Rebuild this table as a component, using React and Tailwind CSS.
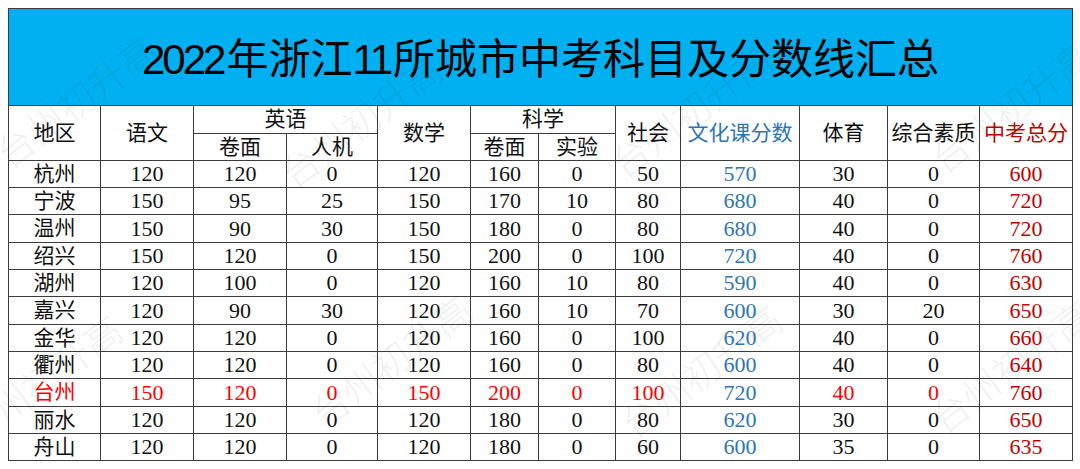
import React from "react";

const cols = [92, 93, 93, 91, 93, 68, 77, 65, 119, 88, 92, 93];
const colClass = [
  "w-[92px]", "w-[93px]", "w-[93px]", "w-[91px]", "w-[93px]", "w-[68px]",
  "w-[77px]", "w-[65px]", "w-[119px]", "w-[88px]", "w-[92px]", "w-[93px]"
];

const rows = [
  ["杭州", 120, 120, 0, 120, 160, 0, 50, 570, 30, 0, 600],
  ["宁波", 150, 95, 25, 150, 170, 10, 80, 680, 40, 0, 720],
  ["温州", 150, 90, 30, 150, 180, 0, 80, 680, 40, 0, 720],
  ["绍兴", 150, 120, 0, 150, 200, 0, 100, 720, 40, 0, 760],
  ["湖州", 120, 100, 0, 120, 160, 10, 80, 590, 40, 0, 630],
  ["嘉兴", 120, 90, 30, 120, 160, 10, 70, 600, 30, 20, 650],
  ["金华", 120, 120, 0, 120, 160, 0, 100, 620, 40, 0, 660],
  ["衢州", 120, 120, 0, 120, 160, 0, 80, 600, 40, 0, 640],
  ["台州", 150, 120, 0, 150, 200, 0, 100, 720, 40, 0, 760],
  ["丽水", 120, 120, 0, 120, 180, 0, 80, 620, 30, 0, 650],
  ["舟山", 120, 120, 0, 120, 180, 0, 60, 600, 35, 0, 635]
];

const rowHeights = [
  "h-[27px]", "h-[27px]", "h-[28px]", "h-[27px]", "h-[27px]", "h-[28px]",
  "h-[27px]", "h-[27px]", "h-[28px]", "h-[27px]", "h-[27px]"
];

// watermark centres, two staggered rows
const marks = [
  { cls: "left-[75px] top-[100px]" },
  { cls: "left-[360px] top-[120px]" },
  { cls: "left-[690px] top-[110px]" },
  { cls: "left-[1010px] top-[105px]" },
  { cls: "left-[40px] top-[380px]" },
  { cls: "left-[390px] top-[360px]" },
  { cls: "left-[700px] top-[370px]" },
  { cls: "left-[1010px] top-[365px]" }
];

const cell = "border border-[#3c3c3c] p-0 text-center align-middle leading-none";

function cellColor(rowName, idx) {
  if (idx === 8) return "text-[#2e75b6]";
  if (idx === 11) return "text-[#c00000]";
  if (rowName === "台州") return "text-[#ff0000]";
  return "text-[#111111]";
}

export default function App() {
  return (
    <div className="relative w-[1080px] h-[469px] bg-white overflow-hidden font-['Liberation_Serif','Noto_Sans_CJK_SC',serif]">
      <div className="pt-2 pl-2">
        <table className="table-fixed border-collapse w-[1064px]">
          <colgroup>
            {cols.map((_, i) => (
              <col key={i} className={colClass[i]} />
            ))}
          </colgroup>
          <tbody>
            {/* title band */}
            <tr className="h-[97px]">
              <td colSpan={12} className={`${cell} bg-[#00b0f0]`}>
                <div className="pt-[5px] text-[42px] text-black font-['Liberation_Sans','Noto_Sans_CJK_SC',sans-serif]">
                  <span className="tracking-[-3px]">2022</span>
                  <span className="ml-[3px]">年浙江</span>
                  <span className="tracking-[-3px]">11</span>
                  <span className="ml-[3px]">所城市中考科目及分数线汇总</span>
                </div>
              </td>
            </tr>

            {/* header rows */}
            <tr className="h-[28px] text-[21px] text-[#111111]">
              <td rowSpan={2} className={cell}>地区</td>
              <td rowSpan={2} className={cell}>语文</td>
              <td colSpan={2} className={cell}>英语</td>
              <td rowSpan={2} className={cell}>数学</td>
              <td colSpan={2} className={cell}>科学</td>
              <td rowSpan={2} className={cell}>社会</td>
              <td rowSpan={2} className={`${cell} text-[#2e75b6]`}>文化课分数</td>
              <td rowSpan={2} className={cell}>体育</td>
              <td rowSpan={2} className={`${cell} whitespace-nowrap`}>综合素质</td>
              <td rowSpan={2} className={`${cell} text-[#c00000] whitespace-nowrap`}>中考总分</td>
            </tr>
            <tr className="h-[27px] text-[21px] text-[#111111]">
              <td className={cell}>卷面</td>
              <td className={cell}>人机</td>
              <td className={cell}>卷面</td>
              <td className={cell}>实验</td>
            </tr>

            {/* data rows */}
            {rows.map((r, ri) => (
              <tr key={r[0]} className={`${rowHeights[ri]} text-[21px]`}>
                {r.map((v, i) => (
                  <td key={i} className={`${cell} ${cellColor(r[0], i)} ${i > 0 ? "text-[22px]" : ""}`}>
                    {v}
                  </td>
                ))}
              </tr>
            ))}
          </tbody>
        </table>
      </div>

      {/* watermark overlay */}
      <div className="absolute inset-0 pointer-events-none">
        {marks.map((m, i) => (
          <span
            key={i}
            className={`absolute ${m.cls} -translate-x-1/2 -translate-y-1/2 -rotate-[37deg] whitespace-nowrap text-[38px] text-black/[0.08] font-['Noto_Sans_CJK_SC',sans-serif] font-light`}
          >
            台州初升高
          </span>
        ))}
      </div>
    </div>
  );
}
